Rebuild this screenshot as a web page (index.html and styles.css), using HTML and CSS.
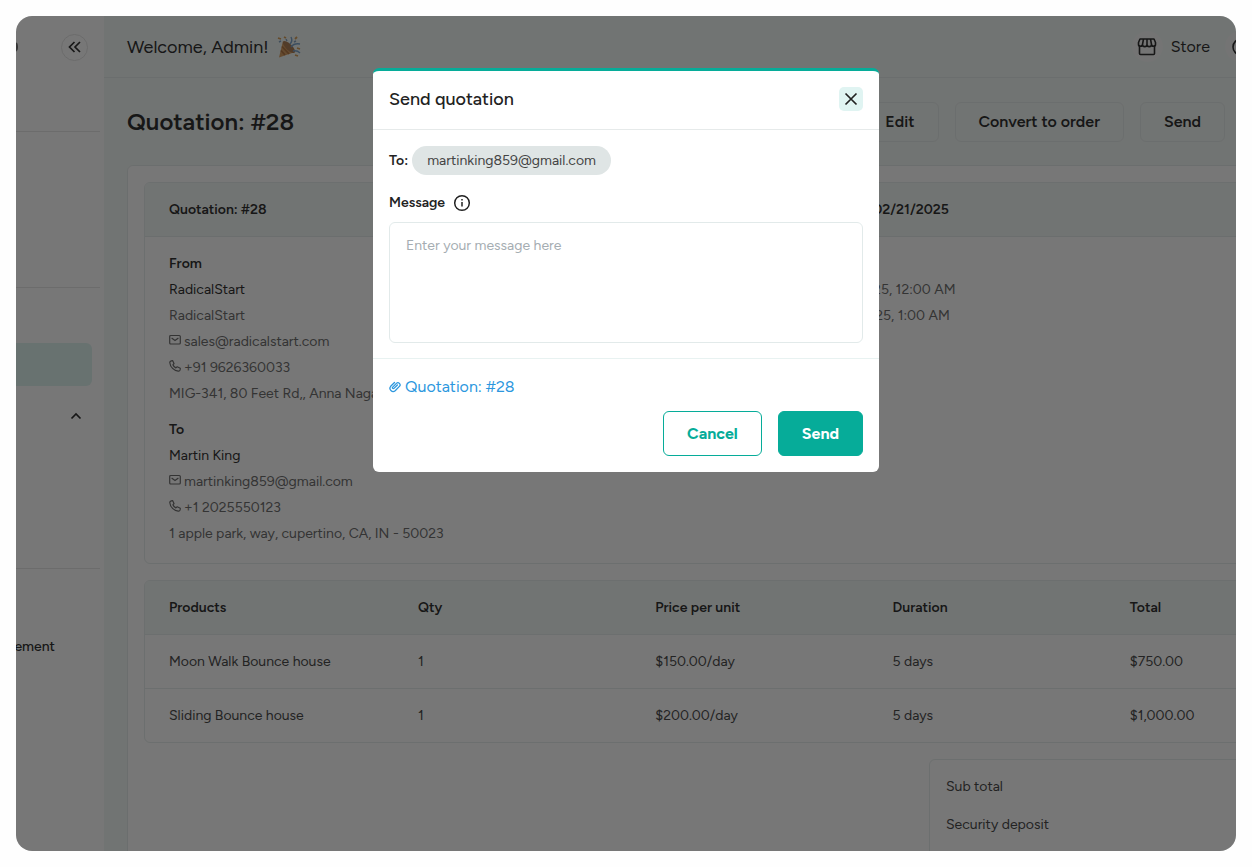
FILE: index.html
```html
<!DOCTYPE html>
<html lang="en">
<head>
<meta charset="utf-8">
<title>Quotation #28</title>
<link rel="stylesheet" href="styles.css">
</head>
<body>
<svg class="defs" aria-hidden="true">
  <symbol id="mail" viewBox="0 0 12 12"><rect x="0.700" y="1.500" width="10.600" height="8.500" rx="1" fill="none" stroke="currentColor" stroke-width="1.200"/><path d="M2.600 4 6 6.600 9.400 4" fill="none" stroke="currentColor" stroke-width="1.200"/></symbol>
  <symbol id="phone" viewBox="0 0 12 12"><path d="M2.300.8 3.600.6 5 3.500 3.900 4.800c.5 1.300 1.600 2.400 3 3.100L8.200 6.800l3.100 1.400-.2 1.700c-.2.900-1 1.400-1.900 1.300C5 10.800 1.200 7 .8 2.700.7 1.700 1.300 1 2.300.8Z" fill="none" stroke="currentColor" stroke-width="1.200" stroke-linejoin="round"/></symbol>
</svg>
<div class="frame">
  <aside class="sidebar">
    <div class="side-top">
      <span class="dot"></span>
      <button class="collapse" aria-label="Collapse menu"><svg viewBox="0 0 14 14" width="14" height="14"><path d="M6.500 2 1.500 7l5 5M12 2 7 7l5 5" fill="none" stroke="currentColor" stroke-width="1.700"/></svg></button>
    </div>
    <div class="side-group first"></div>
    <div class="side-group second">
      <div class="active-item"></div>
      <button class="expander" aria-label="Toggle submenu"><svg viewBox="0 0 12 8" width="12" height="8"><path d="M1.500 6.500 6 2l4.500 4.500" fill="none" stroke="currentColor" stroke-width="1.700"/></svg></button>
    </div>
    <a class="side-link" href="#">Management</a>
  </aside>
  <main class="main">
    <header class="topbar">
      <p class="welcome">Welcome, Admin!
        <svg viewBox="0 0 24 24" width="24" height="24" aria-hidden="true">
          <path d="M6 6 18 17 2 22.500Z" fill="#d9a066"/>
          <path d="M5 11.500 12 19M4 15.500 8 20" stroke="#b57a48" stroke-width="1.800"/>
          <ellipse cx="12" cy="12" rx="3" ry="8" transform="rotate(-46 12 12)" fill="#b08058"/>
          <path d="M13 9q3-3 1-7M14 12q3-4 9-3M16 16q4-1 7 2" fill="none" stroke="#7fa6cc" stroke-width="1.400"/>
          <path d="M1 3l3 1M18 4l2-2M20 13l3 1M18 20l3 1M7 2l2 1" stroke="#d9a25c" stroke-width="1.800"/>
          <path d="M2 7l2-1M17 7l2-1M9 4l1 2" stroke="#8aa5c0" stroke-width="1.400"/>
        </svg>
      </p>
      <a class="store" href="#">
        <span class="round"><svg viewBox="0 0 20 20" width="20" height="20"><path d="M2.500 8v8.500a1 1 0 0 0 1 1h13a1 1 0 0 0 1-1V8M3 2h14l1.500 3.500v1.700a2 2 0 0 1-4 .2 2.200 2.200 0 0 1-4.500 0 2.200 2.200 0 0 1-4.500 0 2 2 0 0 1-4-.2V5.500ZM6.500 2 5.500 7.500M10 2v5.500M13.500 2l1 5.500" fill="none" stroke="currentColor" stroke-width="1.600" stroke-linejoin="round"/></svg></span>
        Store
      </a>
      <span class="round edge"><svg viewBox="0 0 20 20" width="20" height="20"><circle cx="10" cy="10" r="8" fill="none" stroke="currentColor" stroke-width="1.600"/></svg></span>
    </header>
    <div class="page-head">
      <h1>Quotation: #28</h1>
      <div class="actions">
        <button class="btn">Edit</button>
        <button class="btn">Convert to order</button>
        <button class="btn">Send</button>
      </div>
    </div>
    <section class="sheet">
      <article class="box">
        <div class="box-head two"><span>Quotation: #28</span><span>Quotation date: 02/21/2025</span></div>
        <div class="box-body two">
          <div>
            <h2>From</h2>
            <p class="name">RadicalStart</p>
            <p>RadicalStart</p>
            <p><svg class="ico"><use href="#mail"/></svg>sales@radicalstart.com</p>
            <p><svg class="ico"><use href="#phone"/></svg>+91 9626360033</p>
            <p>MIG-341, 80 Feet Rd,, Anna Nagar</p>
            <h2 class="next">To</h2>
            <p class="name">Martin King</p>
            <p><svg class="ico"><use href="#mail"/></svg>martinking859@gmail.com</p>
            <p><svg class="ico"><use href="#phone"/></svg>+1 2025550123</p>
            <p>1 apple park, way, cupertino, CA, IN - 50023</p>
          </div>
          <div class="dates">
            <p><span>Start:</span>02/21/2025, 12:00 AM</p>
            <p><span>End:</span>02/26/2025, 1:00 AM</p>
          </div>
        </div>
      </article>
      <table class="products">
        <thead><tr><th class="wide">Products</th><th>Qty</th><th>Price per unit</th><th>Duration</th><th>Total</th></tr></thead>
        <tbody>
          <tr><td>Moon Walk Bounce house</td><td>1</td><td>$150.00/day</td><td>5 days</td><td>$750.00</td></tr>
          <tr><td>Sliding Bounce house</td><td>1</td><td>$200.00/day</td><td>5 days</td><td>$1,000.00</td></tr>
        </tbody>
      </table>
      <div class="totals"><p>Sub total</p><p>Security deposit</p></div>
    </section>
  </main>
  <div class="overlay">
    <form class="modal" role="dialog" aria-labelledby="modal-title">
      <div class="modal-head">
        <h2 id="modal-title">Send quotation</h2>
        <button class="close" type="button" aria-label="Close"><svg viewBox="0 0 14 14" width="14" height="14"><path d="m1.500 1.500 11 11m0-11-11 11" stroke="currentColor" stroke-width="1.700"/></svg></button>
      </div>
      <div class="modal-body">
        <div class="to"><span>To:</span><span class="chip">martinking859@gmail.com</span></div>
        <div class="message-label"><label for="message">Message</label><svg viewBox="0 0 18 18" width="18" height="18"><circle cx="9" cy="9" r="7.300" fill="none" stroke="currentColor" stroke-width="1.500"/><path d="M9 8v4.500M9 5v1.500" stroke="currentColor" stroke-width="1.500"/></svg></div>
        <textarea id="message" placeholder="Enter your message here"></textarea>
      </div>
      <div class="modal-foot">
        <a class="attachment" href="#"><svg viewBox="0 0 12 12" width="12" height="12"><path d="M8.400 4 5 7.400a.9.900 0 0 1-1.300-1.300l3.700-3.700a2.100 2.100 0 0 1 3 3L6.200 9.800a3.200 3.200 0 0 1-4.500-4.500l3.800-3.800" fill="none" stroke="currentColor" stroke-width="1.300" stroke-linecap="round"/></svg>Quotation: #28</a>
        <div class="modal-actions">
          <button class="cancel" type="button">Cancel</button>
          <button class="submit" type="submit">Send</button>
        </div>
      </div>
    </form>
  </div>
</div>
</body>
</html>
```
FILE: styles.css
```css
* { box-sizing: border-box; }
body { margin: 0; padding: 16px; background: #fefefe; font: 400 14px/26px Figtree, Lato, sans-serif; color: #333; }
h1, h2, p { margin: 0; font-weight: inherit; }
button { font: inherit; color: inherit; padding: 0; cursor: pointer; }
a { color: inherit; text-decoration: none; }
svg { flex: none; }
.defs { position: absolute; width: 0; height: 0; }
.frame { position: relative; display: flex; height: calc(100vh - 32px); min-height: 600px; border-radius: 16px; overflow: hidden; background: #fff; }

.sidebar { flex: none; width: 88px; overflow: hidden; }
.side-top { display: flex; align-items: center; justify-content: space-between; height: 62px; padding-right: 16px; }
.dot { width: 8px; height: 10px; margin-left: -6px; border-radius: 4px; background: #777; }
.collapse { display: grid; place-items: center; width: 27px; height: 27px; border: 1px solid #e6e6e6; border-radius: 50%; background: none; }
.side-group { margin-right: 4px; border-top: 1px solid #e8e8e8; }
.side-group.first { margin-top: 53px; height: 156px; }
.side-group.second { height: 282px; padding-top: 55px; border-bottom: 1px solid #e8e8e8; }
.active-item { height: 43px; margin-right: 8px; border-radius: 0 6px 6px 0; background: #dff4f1; }
.expander { display: grid; place-items: center; width: 24px; height: 24px; margin: 18px 12px 0 auto; border: 0; background: none; }
.side-link { display: flex; justify-content: flex-end; width: 39px; margin-top: 65px; font-weight: 500; color: #333; }

.main { flex: 1; min-width: 0; overflow: hidden; background: #f2f8f6; }
.topbar { display: flex; align-items: center; height: 62px; padding-left: 23px; border-bottom: 1px solid #e6eceb; }
.welcome { display: flex; align-items: center; gap: 8px; margin-right: auto; font-size: 18px; }
.store { display: flex; align-items: center; gap: 8px; margin-right: 15px; font-size: 16px; }
.round { display: grid; place-items: center; width: 31px; height: 31px; border-radius: 50%; background: #f8f8f8; }
.edge { margin-right: -20px; }
.page-head { display: flex; align-items: center; justify-content: space-between; height: 87px; padding: 0 11px 0 23px; }
h1 { font-size: 24px; font-weight: 600; }
.actions { display: flex; gap: 16px; }
.btn { height: 40px; padding: 0 23px; border: 1px solid #e6eceb; border-radius: 6px; background: none; font-size: 16px; font-weight: 600; }
.sheet { height: 800px; margin: 0 -125px 0 23px; padding: 16px; border: 1px solid #e6eceb; border-radius: 6px; background: #fff; }
.box { border: 1px solid #e8eeed; border-radius: 6px; overflow: hidden; }
.two { display: grid; grid-template-columns: 600px 1fr; }
.box-head { height: 54px; align-items: center; padding-left: 24px; background: #f2f8f6; border-bottom: 1px solid #e6eceb; font-weight: 600; }
.box-body { padding: 14px 0 16px 24px; color: #707070; }
.box-body h2 { font-size: 14px; font-weight: 600; color: #333; }
.box-body .next { margin-top: 10px; }
.name { color: #333; }
.ico { width: 12px; height: 12px; margin-right: 3px; }
.dates { padding-top: 26px; }
.dates span { display: inline-block; width: 46px; }
.products { width: 100%; margin-top: 16px; table-layout: fixed; border: 1px solid #e8eeed; border-radius: 6px; border-spacing: 0; text-align: left; overflow: hidden; }
.products th, .products td { height: 54px; padding: 0 24px; border-bottom: 1px solid #e8eeed; }
.products th { background: #f2f8f6; font-weight: 600; }
.products .wide { width: 249px; }
.products td { color: #4c4c4c; }
.products tr:last-child td { height: 53px; border-bottom: 0; }
.totals { width: 415px; height: 200px; margin: 16px 0 0 auto; padding: 14px 16px; border: 1px solid #e8eeed; border-radius: 6px; color: #4c4c4c; }
.totals p + p { margin-top: 12px; }

.overlay { position: absolute; inset: 0; display: flex; justify-content: center; align-items: flex-start; padding-top: 52px; background: rgba(0, 0, 0, .533); }
.modal { width: 506px; border-top: 3px solid #06ac99; border-radius: 6px; background: #fff; color: #222; }
.modal-head { display: flex; align-items: center; justify-content: space-between; height: 59px; padding: 0 16px 2px; border-bottom: 1px solid #e6eaea; }
.modal-head h2 { font-size: 18px; font-weight: 500; }
.close { display: grid; place-items: center; width: 24px; height: 24px; border: 0; border-radius: 5px; background: #e0f4f2; }
.modal-body { padding: 16px 16px 15px; border-bottom: 1px solid #e8f2f1; }
.to { display: flex; align-items: center; gap: 4px; font-weight: 600; }
.chip { padding: 2px 15px; border-radius: 15px; background: #dfe5e5; color: #444; font-weight: 400; line-height: 25px; }
.message-label { display: flex; align-items: center; gap: 8px; height: 24px; margin: 16px 0 7px; font-weight: 600; }
textarea { display: block; width: 100%; height: 121px; padding: 10px 16px; border: 1px solid #e2eaea; border-radius: 6px; resize: none; font: inherit; color: inherit; outline: 0; }
textarea::placeholder { color: #a5adb2; opacity: 1; }
.modal-foot { padding: 16px; }
.attachment { display: flex; align-items: center; gap: 4px; height: 24px; color: #2c97de; font-size: 16px; }
.modal-actions { display: flex; justify-content: flex-end; gap: 16px; margin-top: 12px; }
.modal-actions button { height: 45px; padding: 0 23px; border: 1px solid #06ac99; border-radius: 6px; background: #fff; color: #06ac99; font-size: 16px; font-weight: 700; }
.modal-actions .submit { background: #06ac99; color: #fff; }
```
